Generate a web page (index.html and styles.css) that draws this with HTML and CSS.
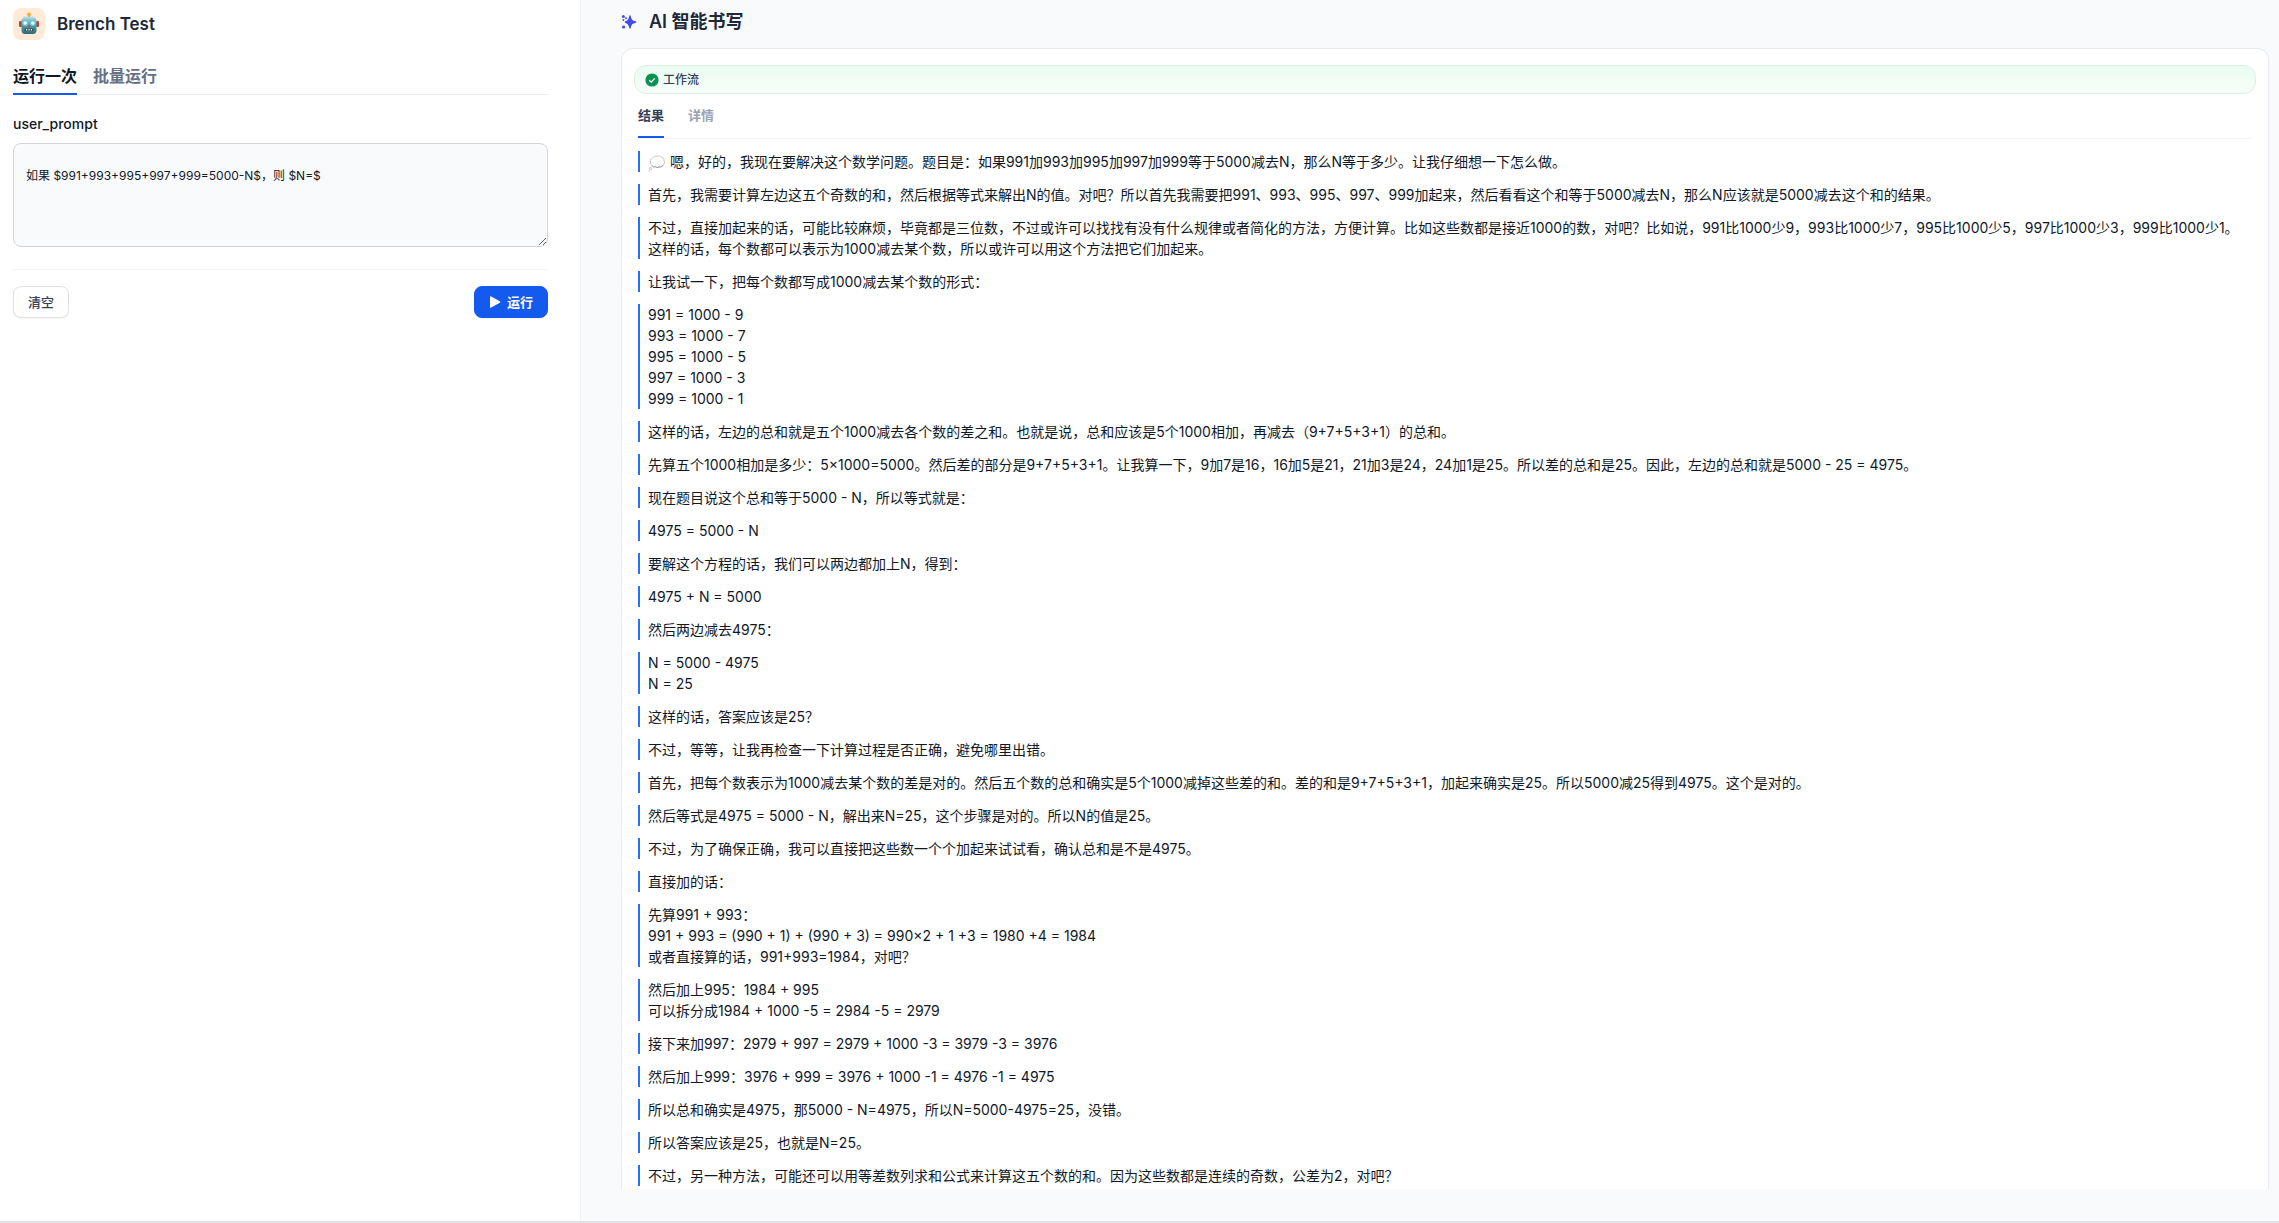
FILE: index.html
```html
<!DOCTYPE html>
<html lang="zh-CN">
<head>
<meta charset="utf-8">
<meta name="viewport" content="width=device-width, initial-scale=1">
<title>Brench Test</title>
<link rel="stylesheet" href="styles.css">
</head>
<body>
<div class="app">
  <section class="side">
    <header class="brand">
      <span class="brand-icon">
        <svg width="20" height="24" viewBox="0 0 20 24" aria-hidden="true">
          <defs><linearGradient id="face" x1="0" y1="0" x2="0" y2="1"><stop offset="0" stop-color="#c9dde0"/><stop offset=".4" stop-color="#62a3ad"/><stop offset="1" stop-color="#266e7c"/></linearGradient></defs>
          <rect x="9" y="3" width="2" height="3" fill="#71949c"/>
          <circle cx="10" cy="2.300" r="1.900" fill="#f5ab2d"/>
          <rect x="0" y="9" width="3" height="6" rx="1.200" fill="#b8433f"/>
          <rect x="17" y="9" width="3" height="6" rx="1.200" fill="#b8433f"/>
          <path d="M5 4.500h10l2.500 3v10.500q0 4-3.500 4H6q-3.500 0-3.500-4V7.500z" fill="url(#face)"/>
          <circle cx="6.200" cy="11" r="3.100" fill="#55cbe4"/><circle cx="13.800" cy="11" r="3.100" fill="#55cbe4"/>
          <circle cx="6.200" cy="11" r="1.800" fill="#f4ffff"/><circle cx="13.800" cy="11" r="1.800" fill="#f4ffff"/>
          <path d="M10 12l1.500 3h-3z" fill="#dd4840"/>
          <rect x="5.500" y="16.500" width="9" height="2.500" rx="1" fill="#344e56"/>
          <path d="M7 17.800h1.200M9.400 17.800h1.200M11.800 17.800h1.200" stroke="#eee" stroke-width="1.500"/>
        </svg>
      </span>
      <h1>Brench Test</h1>
    </header>
    <nav class="tabs">
      <button class="tab active" type="button">运行一次</button>
      <button class="tab" type="button">批量运行</button>
    </nav>
    <form class="form">
      <label for="prompt">user_prompt</label>
      <textarea id="prompt">如果 $991+993+995+997+999=5000-N$，则 $N=$</textarea>
      <div class="actions">
        <button class="btn" type="button">清空</button>
        <button class="btn primary" type="button">
          <svg width="12" height="14" viewBox="0 0 12 14" aria-hidden="true"><path d="M1 2.200v9.600q0 1.200 1.200.7l8.600-4.700q1-.8 0-1.600L2.200 1.500Q1 1 1 2.200z" fill="#fff"/></svg>
          运行
        </button>
      </div>
    </form>
  </section>

  <main class="main">
    <header class="main-head">
      <svg width="16" height="16" viewBox="0 0 16 16" fill="#444ce7" aria-hidden="true">
        <path d="M9 2c.7 3.900 1.800 5.300 5.600 6-3.800.8-4.900 2.100-5.600 6-.7-3.900-1.800-5.200-4.600-6C7.200 7.300 8.300 5.900 9 2z" stroke="#444ce7" stroke-width="1.400" stroke-linejoin="round"/>
        <circle cx="2.400" cy="2.600" r="1.500"/><circle cx="5" cy="4.200" r="1"/><circle cx="2.400" cy="6" r="1"/><circle cx="2.600" cy="13" r="1.600"/>
      </svg>
      <h2>AI 智能书写</h2>
    </header>
    <div class="card">
      <div class="status">
        <svg width="14" height="14" viewBox="0 0 14 14" aria-hidden="true"><circle cx="7" cy="7" r="6.600" fill="#099250"/><path d="M4.200 7.200l2 1.900 3.600-3.700" fill="none" stroke="#fff" stroke-width="1.300"/></svg>
        <span>工作流</span>
      </div>
      <nav class="result-tabs">
        <button class="result-tab active" type="button">结果</button>
        <button class="result-tab" type="button">详情</button>
      </nav>
      <article class="answer">
        <blockquote><svg class="thought" width="18" height="18" viewBox="0 0 18 18" role="img" aria-label="思考"><path d="M4 11.500q-2.500-1-1.500-3.500Q1.500 5 4.500 4.200 6 1.500 9 2.200q3-1.200 4.500 1.200 3 .3 2.700 3.400 1.300 2.700-1.200 4.200-1 2.800-4 1.900-2 1.400-3.700-.1Q5 13.300 4 11.500z" fill="#fdfdfd" stroke="#c4c4c4" stroke-width=".9"/><path d="M4 11.500q1 1.800 3.300 1.300 1.700 1.500 3.700.1 3 .9 4-1.900" fill="none" stroke="#999" stroke-width=".9"/><circle cx="2.600" cy="14.500" r="1.200" fill="#eee" stroke="#aaa" stroke-width=".6"/><circle cx="1.200" cy="17" r=".6" fill="#aaa"/></svg> 嗯，好的，我现在要解决这个数学问题。题目是：如果991加993加995加997加999等于5000减去N，那么N等于多少。让我仔细想一下怎么做。</blockquote>
        <blockquote>首先，我需要计算左边这五个奇数的和，然后根据等式来解出N的值。对吧？所以首先我需要把991、993、995、997、999加起来，然后看看这个和等于5000减去N，那么N应该就是5000减去这个和的结果。</blockquote>
        <blockquote>不过，直接加起来的话，可能比较麻烦，毕竟都是三位数，不过或许可以找找有没有什么规律或者简化的方法，方便计算。比如这些数都是接近1000的数，对吧？比如说，991比1000少9，993比1000少7，995比1000少5，997比1000少3，999比1000少1。这样的话，每个数都可以表示为1000减去某个数，所以或许可以用这个方法把它们加起来。</blockquote>
        <blockquote>让我试一下，把每个数都写成1000减去某个数的形式：</blockquote>
        <blockquote>991 = 1000 - 9<br>993 = 1000 - 7<br>995 = 1000 - 5<br>997 = 1000 - 3<br>999 = 1000 - 1</blockquote>
        <blockquote>这样的话，左边的总和就是五个1000减去各个数的差之和。也就是说，总和应该是5个1000相加，再减去（9+7+5+3+1）的总和。</blockquote>
        <blockquote>先算五个1000相加是多少：5×1000=5000。然后差的部分是9+7+5+3+1。让我算一下，9加7是16，16加5是21，21加3是24，24加1是25。所以差的总和是25。因此，左边的总和就是5000 - 25 = 4975。</blockquote>
        <blockquote>现在题目说这个总和等于5000 - N，所以等式就是：</blockquote>
        <blockquote>4975 = 5000 - N</blockquote>
        <blockquote>要解这个方程的话，我们可以两边都加上N，得到：</blockquote>
        <blockquote>4975 + N = 5000</blockquote>
        <blockquote>然后两边减去4975：</blockquote>
        <blockquote>N = 5000 - 4975<br>N = 25</blockquote>
        <blockquote>这样的话，答案应该是25？</blockquote>
        <blockquote>不过，等等，让我再检查一下计算过程是否正确，避免哪里出错。</blockquote>
        <blockquote>首先，把每个数表示为1000减去某个数的差是对的。然后五个数的总和确实是5个1000减掉这些差的和。差的和是9+7+5+3+1，加起来确实是25。所以5000减25得到4975。这个是对的。</blockquote>
        <blockquote>然后等式是4975 = 5000 - N，解出来N=25，这个步骤是对的。所以N的值是25。</blockquote>
        <blockquote>不过，为了确保正确，我可以直接把这些数一个个加起来试试看，确认总和是不是4975。</blockquote>
        <blockquote>直接加的话：</blockquote>
        <blockquote>先算991 + 993：<br>991 + 993 = (990 + 1) + (990 + 3) = 990×2 + 1 +3 = 1980 +4 = 1984<br>或者直接算的话，991+993=1984，对吧？</blockquote>
        <blockquote>然后加上995：1984 + 995<br>可以拆分成1984 + 1000 -5 = 2984 -5 = 2979</blockquote>
        <blockquote>接下来加997：2979 + 997 = 2979 + 1000 -3 = 3979 -3 = 3976</blockquote>
        <blockquote>然后加上999：3976 + 999 = 3976 + 1000 -1 = 4976 -1 = 4975</blockquote>
        <blockquote>所以总和确实是4975，那5000 - N=4975，所以N=5000-4975=25，没错。</blockquote>
        <blockquote>所以答案应该是25，也就是N=25。</blockquote>
        <blockquote>不过，另一种方法，可能还可以用等差数列求和公式来计算这五个数的和。因为这些数都是连续的奇数，公差为2，对吧？</blockquote>
      </article>
    </div>
  </main>
</div>
</body>
</html>
```
FILE: styles.css
```css
* { box-sizing: border-box; }
body {
  margin: 0;
  background: #f9fafb;
  color: #101828;
  font-family: Inter, "Noto Sans CJK SC", sans-serif;
  font-size: 14px;
  line-height: 21px;
}
h1, h2, blockquote { margin: 0; }
button, textarea { font: inherit; color: inherit; }
button { cursor: pointer; }
svg { flex: none; }

.app {
  display: flex;
  height: 100vh;
  overflow: hidden;
  border-bottom: 2px solid #e1e2e5;
}

.side {
  flex: none;
  width: 581px;
  padding: 8px 32px 0 13px;
  background: #fff;
  border-right: 1px solid #f0f1f4;
}
.brand { display: flex; align-items: center; gap: 12px; }
.brand-icon {
  display: flex;
  align-items: center;
  justify-content: center;
  width: 32px;
  height: 32px;
  border-radius: 8px;
  background: #ffead5;
}
h1, h2 {
  font-size: 18px;
  line-height: 28px;
  font-weight: 600;
  color: #1d2939;
}
h1 { font-size: 17px; }

.tabs {
  display: flex;
  gap: 16px;
  margin-top: 22px;
  border-bottom: 1px solid #eaecf0;
}
.tab {
  margin-bottom: -1px;
  padding: 2px 0 5px;
  border: 0;
  border-bottom: 2px solid transparent;
  background: none;
  font-size: 16px;
  line-height: 24px;
  font-weight: 600;
  color: #667085;
}
.tab.active { border-color: #155aef; color: #101828; }

.form { display: flex; flex-direction: column; padding-top: 19px; }
.form label { font-weight: 500; line-height: 20px; }
textarea {
  height: 104px;
  margin-top: 9px;
  padding: 22px 12px;
  border: 1px solid #d0d5dd;
  border-radius: 8px;
  background: #f9fafb;
  font-size: 12px;
  line-height: 20px;
  resize: vertical;
}
.actions {
  display: flex;
  justify-content: space-between;
  margin-top: 22px;
  padding-top: 16px;
  border-top: 1px solid #f2f4f7;
}
.btn {
  display: flex;
  align-items: center;
  gap: 6px;
  height: 32px;
  padding: 0 14px;
  border: 1px solid #e0e2e7;
  border-radius: 8px;
  background: #fff;
  box-shadow: 0 1px 2px rgb(16 24 40 / 5%);
  font-size: 13px;
  font-weight: 500;
  color: #344054;
}
.btn.primary { border-color: #155aef; background: #155aef; color: #fff; font-weight: 600; }

.main {
  display: flex;
  flex: 1;
  flex-direction: column;
  min-width: 0;
  padding: 8px 10px 32px 40px;
}
.main-head { display: flex; align-items: center; gap: 12px; }
.card {
  flex: 1;
  min-height: 0;
  margin-top: 12px;
  padding: 16px 12px 0;
  overflow: hidden;
  border: 1px solid #e8eaee;
  border-bottom: 0;
  border-radius: 12px 12px 0 0;
  background: #fff;
}
.status {
  display: flex;
  align-items: center;
  gap: 4px;
  height: 29px;
  padding: 0 10px;
  border: 1px solid #dcefe4;
  border-radius: 12px;
  background: linear-gradient(#eafcf1, #f6fef9);
  font-size: 12px;
  font-weight: 500;
  color: #344054;
}
.result-tabs {
  display: flex;
  gap: 24px;
  margin: 9px 4px 0;
  border-bottom: 1px solid #f2f4f7;
}
.result-tab {
  padding: 2px 0 11px;
  border: 0;
  border-bottom: 2px solid transparent;
  background: none;
  font-size: 13px;
  line-height: 20px;
  font-weight: 600;
  color: #98a2b3;
}
.result-tab.active { border-color: #155aef; color: #344054; }

.answer {
  display: flex;
  flex-direction: column;
  gap: 12px;
  margin: 12px 4px 0;
}
blockquote { padding: 0 8px; border-left: 2px solid #2970ff; }
.thought { vertical-align: middle; }
```
